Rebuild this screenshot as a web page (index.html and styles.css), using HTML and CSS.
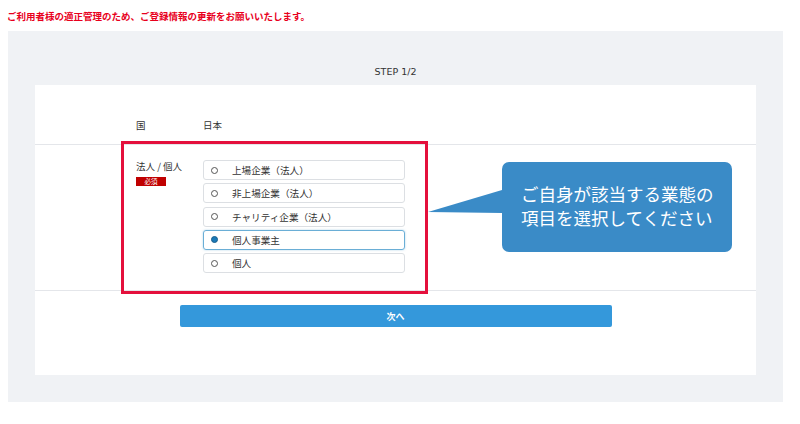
FILE: index.html
```html
<!DOCTYPE html>
<html lang="ja">
<head>
<meta charset="utf-8">
<link rel="stylesheet" href="styles.css">
</head>
<body>
<p class="notice">ご利用者様の適正管理のため、ご登録情報の更新をお願いいたします。</p>
<div class="panel">
  <div class="step">STEP 1/2</div>
  <div class="card">
    <div class="row row-country">
      <div class="label">国</div>
      <div class="value">日本</div>
    </div>
    <div class="row row-type">
      <div class="label">
        <div>法人 / 個人</div>
        <span class="badge">必須</span>
      </div>
      <div class="options">
        <label class="option"><span class="radio"></span>上場企業（法人）</label>
        <label class="option"><span class="radio"></span>非上場企業（法人）</label>
        <label class="option"><span class="radio"></span>チャリティ企業（法人）</label>
        <label class="option selected"><span class="radio"></span>個人事業主</label>
        <label class="option"><span class="radio"></span>個人</label>
      </div>
    </div>
    <div class="actions">
      <button class="next">次へ</button>
    </div>
  </div>
</div>
<div class="highlight"></div>
<div class="callout">
  <svg class="tail" width="74" height="26" viewBox="0 0 74 26"><polygon points="0,22 74,0 74,23" fill="#3a8bc7"/></svg>
  <div class="bubble">ご自身が該当する業態の<br>項目を選択してください</div>
</div>
</body>
</html>
```

FILE: styles.css
```css
html, body {
  margin: 0;
  padding: 0;
  background: #fff;
  font-family: "Noto Sans CJK JP", "Noto Sans", sans-serif;
  color: #333;
}
body {
  position: relative;
  width: 800px;
  height: 424px;
  overflow: hidden;
}
.notice {
  margin: 0;
  padding: 9px 0 0 7px;
  height: 22px;
  font-size: 9.5px;
  line-height: 14px;
  font-weight: 700;
  color: #e8001c;
}
.panel {
  margin: 0 17px 0 8px;
  background: #f0f2f5;
  padding: 0 27px 27px;
}
.step {
  height: 54px;
  box-sizing: border-box;
  padding-top: 35px;
  text-align: center;
  font-family: "DejaVu Sans", sans-serif;
  font-size: 9.5px;
  line-height: 12px;
  color: #333;
}
.card {
  background: #fff;
  height: 290px;
}
.row {
  display: flex;
  padding-left: 101px;
  border-bottom: 1px solid #e4e6ea;
  font-size: 9.5px;
}
.label {
  width: 67px;
  flex: none;
}
.row-country {
  height: 60px;
  box-sizing: border-box;
  padding-top: 33px;
  line-height: 14px;
}
.row-type {
  height: 146px;
  box-sizing: border-box;
  padding-top: 15px;
}
.row-type .label {
  line-height: 12px;
}
.badge {
  display: inline-block;
  margin-top: 5px;
  width: 30px;
  height: 9px;
  background: #c00000;
  color: #fff;
  font-size: 6.5px;
  line-height: 9px;
  text-align: center;
}
.options {
  display: flex;
  flex-direction: column;
  gap: 3.3px;
  width: 202px;
}
.option {
  display: flex;
  align-items: center;
  height: 20px;
  box-sizing: border-box;
  border: 1px solid #dcdfe3;
  border-radius: 3px;
  padding-left: 7px;
  font-size: 9.6px;
  color: #333;
}
.radio {
  width: 7px;
  height: 7px;
  box-sizing: border-box;
  border: 1px solid #555;
  border-radius: 50%;
  margin-right: 14px;
  flex: none;
}
.option.selected {
  border-color: #6aaed6;
  box-shadow: 0 0 2px rgba(80, 160, 210, 0.5);
}
.option.selected .radio {
  background: #1b7ab8;
  border-color: #1a5e8c;
}
.actions {
  display: flex;
  justify-content: center;
  padding-top: 14px;
}
.next {
  width: 432px;
  height: 22px;
  border: none;
  border-radius: 2px;
  background: #3498db;
  color: #fff;
  font-family: "Noto Sans CJK JP", sans-serif;
  font-weight: 700;
  font-size: 9px;
  padding: 0;
}
.highlight {
  position: absolute;
  left: 121px;
  top: 141px;
  width: 307px;
  height: 153px;
  box-sizing: border-box;
  border: 3px solid #e4103c;
}
.callout {
  position: absolute;
  left: 428px;
  top: 162px;
  display: flex;
  align-items: flex-start;
}
.tail {
  display: block;
  margin-top: 28px;
}
.bubble {
  width: 230px;
  height: 90px;
  box-sizing: border-box;
  background: #3a8bc7;
  border-radius: 7px;
  color: #fff;
  font-size: 17.5px;
  line-height: 24px;
  padding: 20px 0 0 19px;
  white-space: nowrap;
}
```
